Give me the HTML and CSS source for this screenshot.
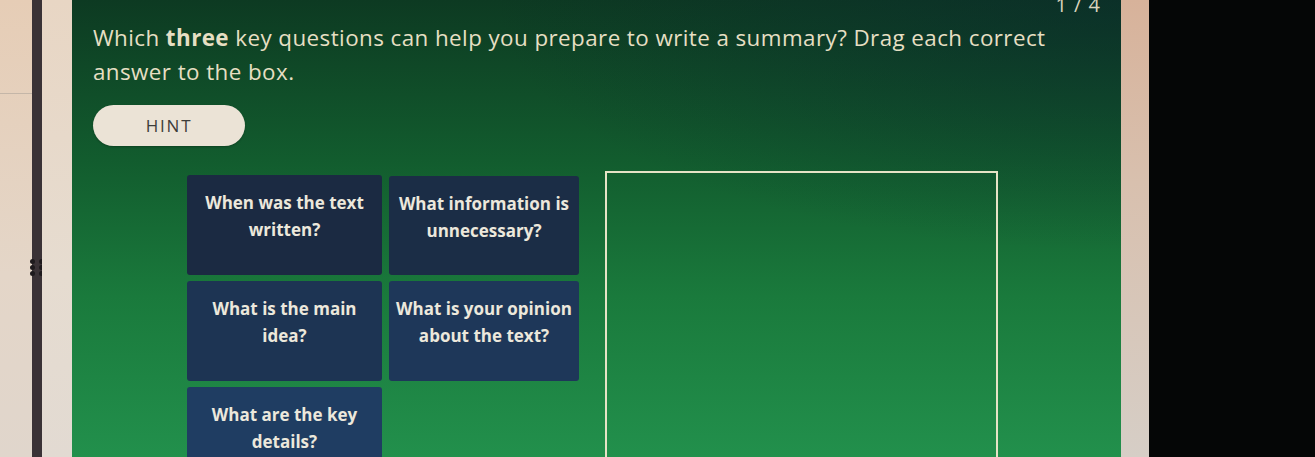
FILE: index.html
```html
<!DOCTYPE html>
<html>
<head>
<meta charset="utf-8">
<link rel="stylesheet" href="styles.css">
</head>
<body>
<div class="screen">
  <div class="edge-left"><div class="edge-line"></div></div>
  <div class="rail"><div class="grip"><span></span><span></span><span></span><span></span><span></span><span></span></div></div>
  <div class="edge-inner"></div>
  <main class="panel">
    <div class="counter">1 / 4</div>
    <p class="prompt">Which <b>three</b> key questions can help you prepare to write a summary? Drag each correct answer to the box.</p>
    <button class="hint">HINT</button>
    <div class="work">
      <div class="cards">
        <div class="card c1">When was the text written?</div>
        <div class="card c2">What information is unnecessary?</div>
        <div class="card c3">What is the main idea?</div>
        <div class="card c4">What is your opinion about the text?</div>
        <div class="card c5">What are the key details?</div>
      </div>
      <div class="dropbox"></div>
    </div>
  </main>
  <div class="edge-right"></div>
  <div class="dark"></div>
</div>
</body>
</html>
```
FILE: styles.css
```css
html, body {
  margin: 0;
  padding: 0;
  width: 1315px;
  height: 457px;
  overflow: hidden;
  background: #000;
}
.screen {
  display: flex;
  height: 457px;
  width: 1315px;
  font-family: "Open Sans", "Noto Sans", sans-serif;
}
.edge-left {
  width: 32px;
  background: linear-gradient(180deg, #e6cdb6 0%, #e4d6c8 60%, #e0d6cc 100%);
  display: flex;
  flex-direction: column;
}
.edge-line {
  margin-top: 93px;
  height: 1px;
  background: #c4b6a8;
}
.rail {
  width: 10px;
  background: #3a3236;
  display: flex;
  flex-direction: column;
  align-items: center;
}
.grip {
  margin-top: 259px;
  display: grid;
  grid-template-columns: 5px 5px;
  gap: 1px 4px;
  width: 14px;
}
.grip span {
  width: 5px;
  height: 5px;
  border-radius: 50%;
  background: #1e1a1d;
}
.edge-inner {
  width: 30px;
  background: linear-gradient(180deg, #e8d6c4 0%, #e6dcd0 60%, #e2dad2 100%);
}
.panel {
  width: 1049px;
  background:
    radial-gradient(ellipse 60% 55% at 100% 0%, rgba(10, 40, 45, 0.55), rgba(10, 40, 45, 0) 100%),
    linear-gradient(180deg, #0d3a22 0%, #125c2e 35%, #1a7a3c 65%, #22904c 100%);
  padding: 0 18px 0 21px;
  box-sizing: border-box;
  display: flex;
  flex-direction: column;
  color: #e6dfc3;
  overflow: hidden;
}
.panel > * {
  flex-shrink: 0;
}
.counter {
  text-align: right;
  font-size: 20px;
  line-height: 20px;
  height: 14px;
  margin-top: -5px;
  margin-right: 2px;
  color: #d9d3bd;
  letter-spacing: 1px;
}
.prompt {
  margin: 12px 0 0;
  font-size: 22.4px;
  line-height: 34px;
  max-width: 1000px;
  letter-spacing: 0.42px;
}
.prompt b {
  font-weight: 700;
}
.hint {
  margin-top: 16px;
  width: 152px;
  height: 41px;
  border: none;
  border-radius: 21px;
  background: #ebe3d6;
  color: #3e3d3a;
  font-family: "Open Sans", "Noto Sans", sans-serif;
  font-size: 17px;
  letter-spacing: 1.8px;
  padding: 0;
  text-align: center;
  box-shadow: 0 1px 2px rgba(0,0,0,0.25);
}
.work {
  display: flex;
  margin-top: 25px;
  margin-left: 94px;
  align-items: flex-start;
}
.cards {
  margin-top: 4px;
  display: grid;
  grid-template-columns: 195px 190px;
  grid-auto-rows: 100px;
  gap: 6px 7px;
}
.card {
  border-radius: 3px;
  color: #ece8dc;
  font-weight: 700;
  font-size: 17px;
  line-height: 27px;
  text-align: center;
  padding: 14px 6px 0;
  box-sizing: border-box;
}
.c1 { background: #1b2a42; }
.c2 { background: #1b2d46; margin-top: 1px; }
.c3 { background: #1d3453; }
.c4 { background: #1e3759; }
.c5 { background: #1f3d62; }
.dropbox {
  margin-left: 26px;
  width: 393px;
  height: 300px;
  border: 2.5px solid #e6e3c6;
  border-bottom: none;
  box-sizing: border-box;
}
.edge-right {
  width: 28px;
  background: linear-gradient(180deg, #d7b29a 0%, #d8c0ae 40%, #d6cec6 100%);
}
.dark {
  flex: 1;
  background: #050606;
}
```
